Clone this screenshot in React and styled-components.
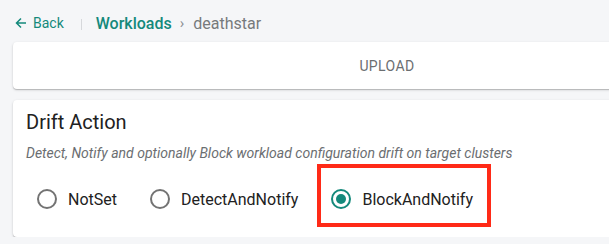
import React from "react";
import styled, { createGlobalStyle } from "styled-components";

const Global = createGlobalStyle`
  html, body { margin: 0; padding: 0; overflow: hidden; background: #f5f6f8; }
  body { font-family: Roboto, "Liberation Sans", Arial, sans-serif; -webkit-font-smoothing: antialiased; }
`;

const Page = styled.div`
  padding-left: 13px;
  width: 748px;
`;

const Header = styled.div`
  height: 42px;
  box-sizing: border-box;
  padding: 4px 0 0 2px;
  display: flex;
  align-items: center;
`;

const BackLink = styled.a`
  display: flex;
  align-items: center;
  gap: 6px;
  color: #14897b;
  font-size: 14px;
  text-decoration: none;
  cursor: pointer;
`;

const Divider = styled.span`
  width: 1px;
  height: 11px;
  background: #d6d8db;
  margin: 3px 14px 0 17px;
`;

const Crumb = styled.span`
  font-size: 16px;
  font-weight: ${(p) => (p.$link ? 500 : 400)};
  color: ${(p) => (p.$link ? "#14897b" : "#777a7c")};
`;

const Chevron = styled.span`
  font-size: 15px;
  color: #8a8d90;
  margin: 0 9px 0 8px;
`;

const Card = styled.div`
  background: #fff;
  border-radius: 4px;
  box-shadow: 0 1px 1px rgba(0, 0, 0, 0.18), 0 1px 3px rgba(0, 0, 0, 0.14);
`;

const UploadCard = styled(Card)`
  height: 47px;
  display: flex;
  align-items: center;
  justify-content: center;
`;

const UploadButton = styled.button`
  border: 0;
  background: transparent;
  font-family: inherit;
  font-size: 14px;
  letter-spacing: 0.4px;
  text-transform: uppercase;
  color: #6b6e71;
  padding: 6px 8px;
`;

const SectionCard = styled(Card)`
  margin-top: 11px;
  padding: 10px 13px 19px;
`;

const Title = styled.h2`
  margin: 0;
  font-size: 20px;
  font-weight: 400;
  line-height: 24px;
  color: #212121;
`;

const Description = styled.p`
  margin: 11px 0 0;
  font-size: 14px;
  font-style: italic;
  line-height: 16px;
  color: #6b6e71;
`;

const OptionGroup = styled.div`
  margin-top: 19px;
  height: 38px;
  display: flex;
  align-items: center;
  gap: 33px;
  padding-left: 11px;
`;

const Option = styled.label`
  position: relative;
  display: flex;
  align-items: center;
  gap: 11px;
  font-size: 16px;
  color: #212121;
  cursor: pointer;
`;

const Highlight = styled.span`
  position: absolute;
  left: -14px;
  top: -25px;
  right: -18px;
  bottom: -18px;
  border: 4px solid #ff2a17;
  pointer-events: none;
`;

const RadioIcon = ({ checked }) => (
  <svg width="20" height="20" viewBox="0 0 20 20">
    <circle
      cx="10"
      cy="10"
      r="9"
      fill="none"
      stroke={checked ? "#14897b" : "#737373"}
      strokeWidth="2"
    />
    {checked && <circle cx="10" cy="10" r="5" fill="#14897b" />}
  </svg>
);

const BackArrow = () => (
  <svg width="12" height="12" viewBox="0 0 12 12">
    <path
      d="M11 6H1.5M6 1.5L1.5 6 6 10.5"
      fill="none"
      stroke="#14897b"
      strokeWidth="1.5"
    />
  </svg>
);

const options = ["NotSet", "DetectAndNotify", "BlockAndNotify"];

export default function App() {
  const selected = "BlockAndNotify";
  return (
    <>
      <Global />
      <Page>
        <Header>
          <BackLink>
            <BackArrow />
            Back
          </BackLink>
          <Divider />
          <Crumb $link>Workloads</Crumb>
          <Chevron>›</Chevron>
          <Crumb>deathstar</Crumb>
        </Header>
        <UploadCard>
          <UploadButton>Upload</UploadButton>
        </UploadCard>
        <SectionCard>
          <Title>Drift Action</Title>
          <Description>
            Detect, Notify and optionally Block workload configuration drift on target clusters
          </Description>
          <OptionGroup>
            {options.map((o) => (
              <Option key={o}>
                <RadioIcon checked={o === selected} />
                {o}
                {o === selected && <Highlight />}
              </Option>
            ))}
          </OptionGroup>
        </SectionCard>
      </Page>
    </>
  );
}
